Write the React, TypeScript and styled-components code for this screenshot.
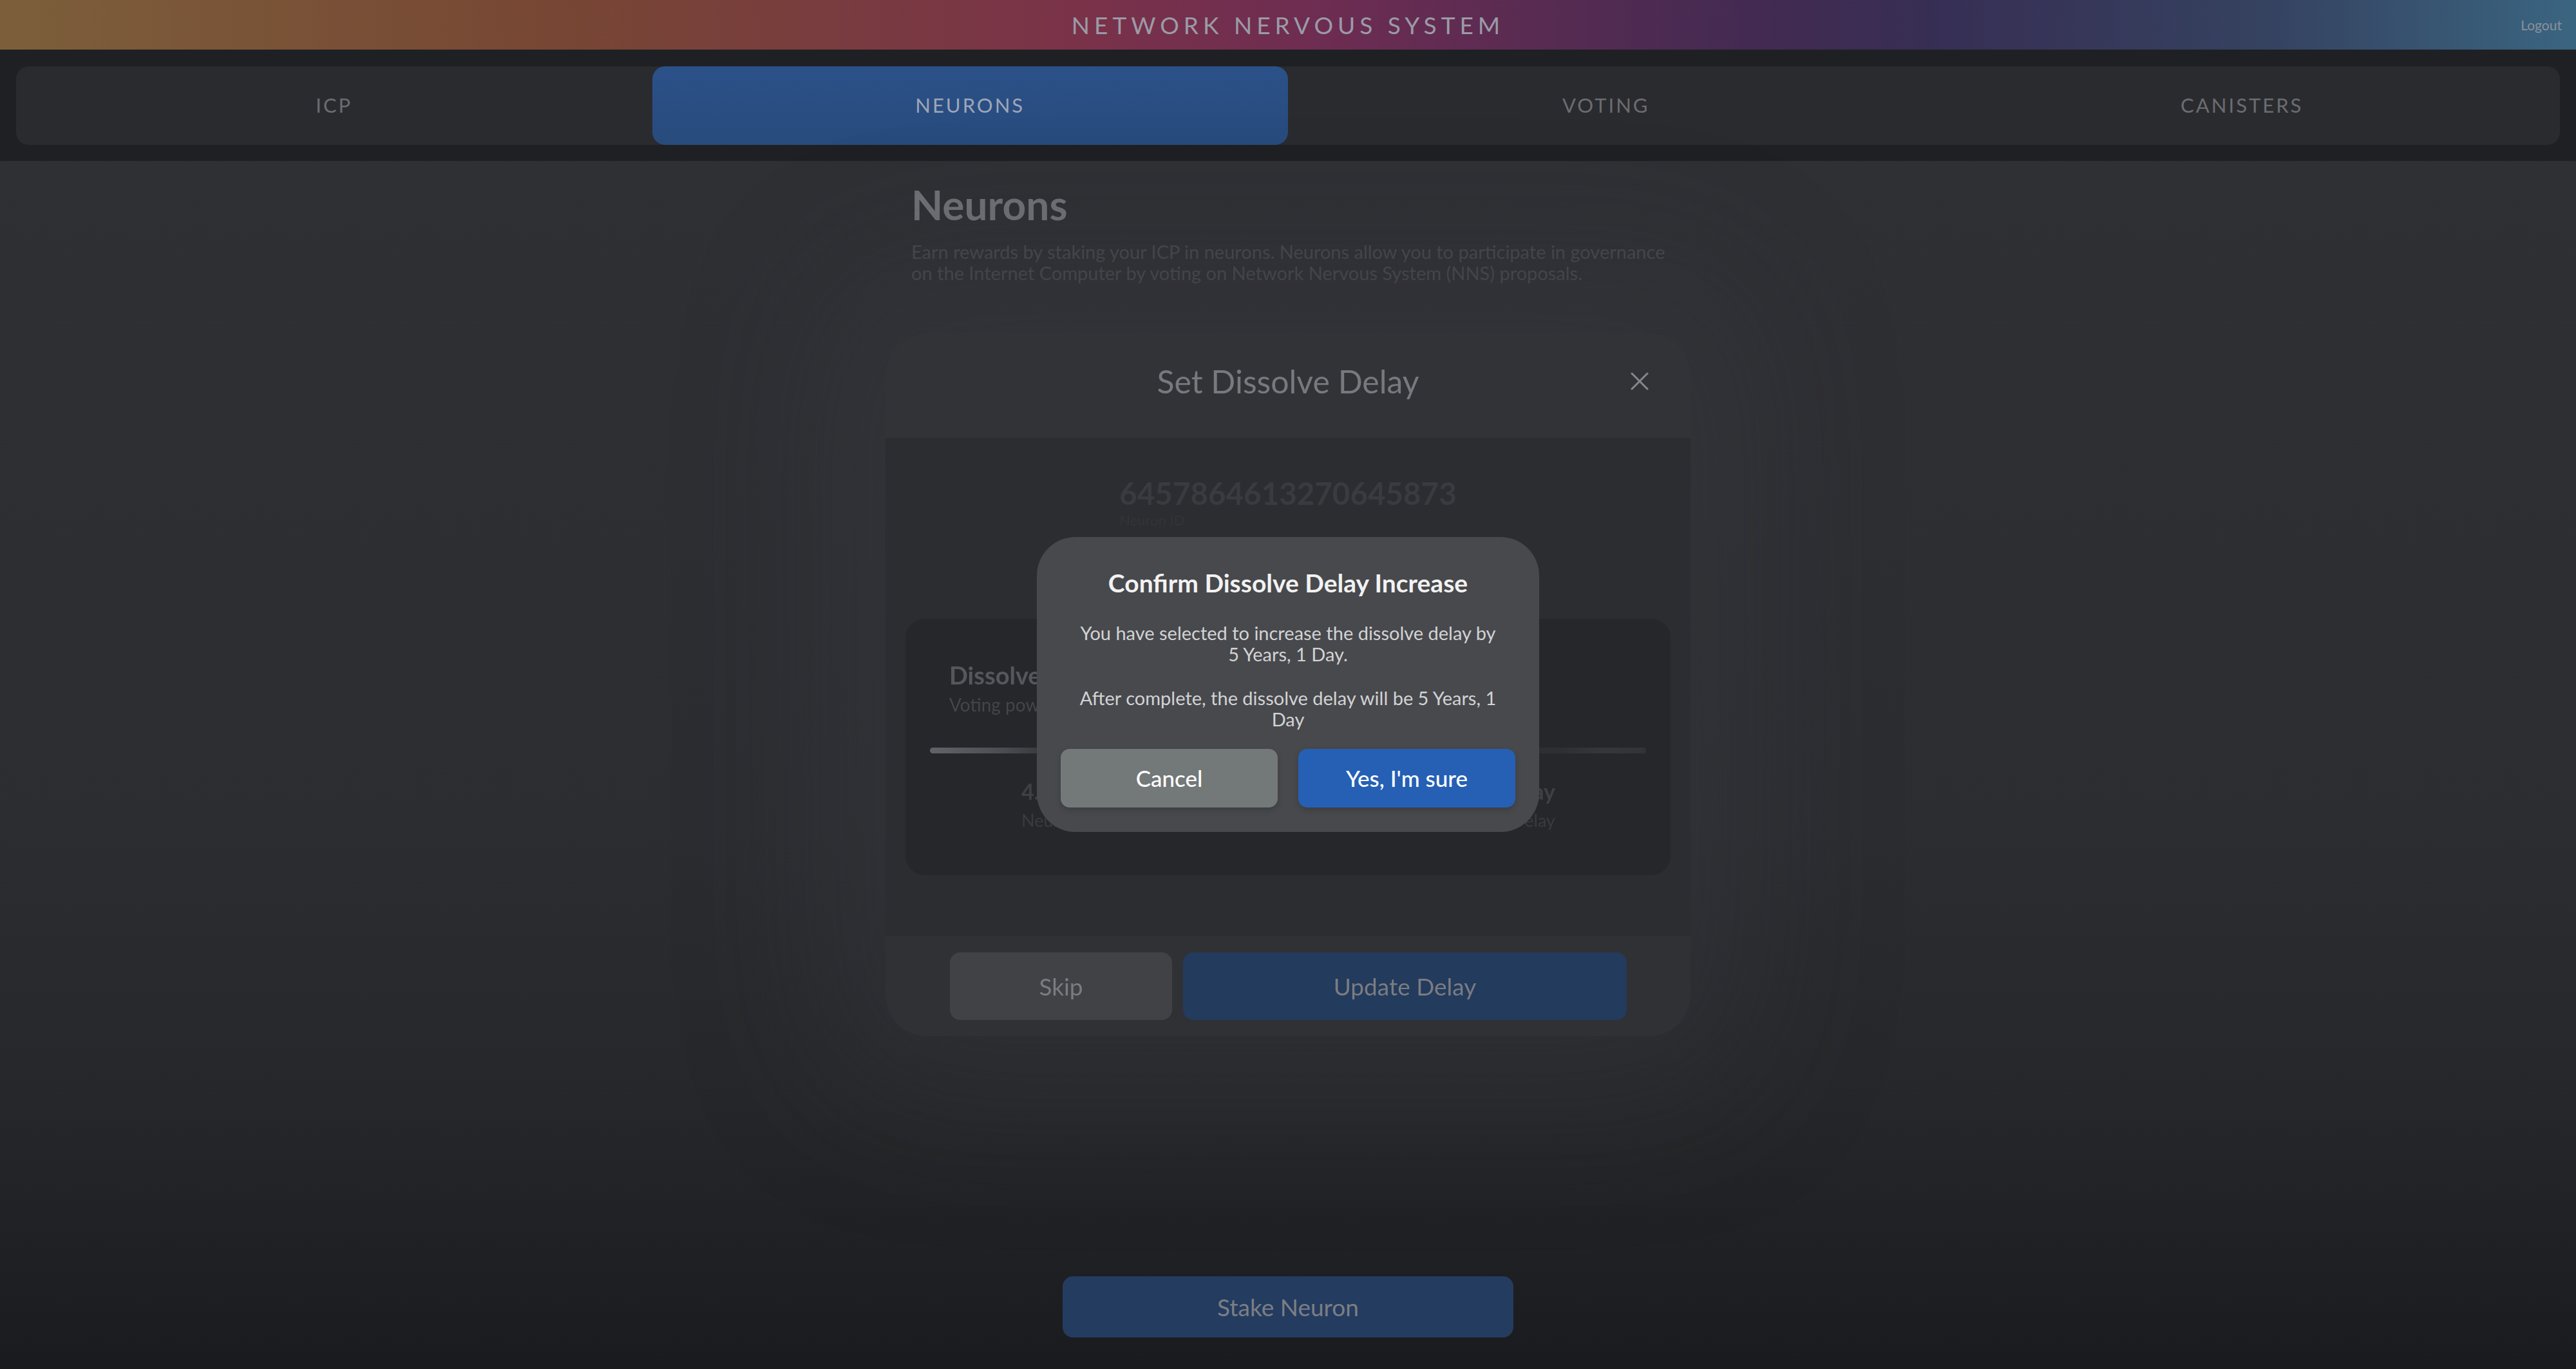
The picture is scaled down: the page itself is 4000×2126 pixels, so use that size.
import styled, { createGlobalStyle } from 'styled-components'

const GlobalStyle = createGlobalStyle`
  html, body {
    margin: 0;
    padding: 0;
  }
  body {
    background: #1b1c1f;
    font-family: Lato, "Noto Sans", sans-serif;
  }
  * {
    box-sizing: border-box;
  }
`

const TABS = ['ICP', 'NEURONS', 'VOTING', 'CANISTERS']

const App = () => {
    return (
        <>
            <GlobalStyle />
            <Page>
                <TopBar>
                    <span />
                    <Brand>Network Nervous System</Brand>
                    <Logout>Logout</Logout>
                </TopBar>
                <NavBar>
                    <Tabs>
                        {TABS.map(tab => (
                            <Tab key={tab} $active={tab === 'NEURONS'}>{tab}</Tab>
                        ))}
                    </Tabs>
                </NavBar>
                <Main>
                    <Intro>
                        <PageTitle>Neurons</PageTitle>
                        <Lead>
                            Earn rewards by staking your ICP in neurons. Neurons allow you to participate in governance
                            on the Internet Computer by voting on Network Nervous System (NNS) proposals.
                        </Lead>
                    </Intro>
                    <StakeButton>Stake Neuron</StakeButton>
                </Main>
            </Page>

            <Backdrop>
                <DelayModal>
                    <ModalHeader>
                        <span />
                        <ModalTitle>Set Dissolve Delay</ModalTitle>
                        <CloseButton aria-label="Close">
                            <svg width="28" height="28" viewBox="0 0 28 28">
                                <path d="M2 2 L26 26 M26 2 L2 26" stroke="currentColor" strokeWidth="3" strokeLinecap="round" />
                            </svg>
                        </CloseButton>
                    </ModalHeader>
                    <ModalBody>
                        <IdBlock>
                            <NeuronId>6457864613270645873</NeuronId>
                            <IdLabel>Neuron ID</IdLabel>
                        </IdBlock>
                        <DelayCard>
                            <CardHeading>
                                <CardTitle>Dissolve Delay</CardTitle>
                                <CardText>Voting power is given to neurons with a dissolve delay of at least 6 months</CardText>
                            </CardHeading>
                            <Track />
                            <Values>
                                <ValueColumn $align="left">
                                    <Value>4.00</Value>
                                    <ValueLabel>Neuron ICP</ValueLabel>
                                </ValueColumn>
                                <ValueColumn $align="right">
                                    <Value>5 Years, 1 Day</Value>
                                    <ValueLabel>Dissolve Delay</ValueLabel>
                                </ValueColumn>
                            </Values>
                        </DelayCard>
                    </ModalBody>
                    <ModalFooter>
                        <FooterButton $kind="secondary">Skip</FooterButton>
                        <FooterButton $kind="primary">Update Delay</FooterButton>
                    </ModalFooter>
                </DelayModal>
            </Backdrop>

            <Backdrop>
                <ConfirmDialog>
                    <ConfirmTitle>Confirm Dissolve Delay Increase</ConfirmTitle>
                    <ConfirmText>You have selected to increase the dissolve delay by 5 Years, 1 Day.</ConfirmText>
                    <ConfirmText>After complete, the dissolve delay will be 5 Years, 1 Day</ConfirmText>
                    <ConfirmActions>
                        <ConfirmButton $kind="cancel">Cancel</ConfirmButton>
                        <ConfirmButton $kind="confirm">Yes, I'm sure</ConfirmButton>
                    </ConfirmActions>
                </ConfirmDialog>
            </Backdrop>
        </>
    )
}

export default App


const Page = styled.div`
    min-height: 100vh;
    display: flex;
    flex-direction: column;
`;

const TopBar = styled.header`
    height: 77px;
    display: grid;
    grid-template-columns: 1fr auto 1fr;
    align-items: center;
    background: linear-gradient(90deg, #7c5f3a 0%, #774634 22%, #7a3249 42%, #6c2c52 52%, #432a52 68%, #372e54 75%, #354260 88%, #3a6581 100%);
`;

const Brand = styled.h1`
    margin: 0;
    font-size: 37px;
    font-weight: 400;
    letter-spacing: 7px;
    text-transform: uppercase;
    color: #9b9ba7;
`;

const Logout = styled.span`
    justify-self: end;
    padding-right: 22px;
    font-size: 21px;
    color: #8c909c;
`;

const NavBar = styled.nav`
    background: #1f2023;
    padding: 26px 25px 25px;
`;

const Tabs = styled.div`
    display: grid;
    grid-template-columns: repeat(4, 1fr);
    height: 122px;
    background: #2a2b2f;
    border-radius: 20px;
`;

const Tab = styled.div<{ $active?: boolean }>`
    display: flex;
    align-items: center;
    justify-content: center;
    padding-bottom: 3px;
    border-radius: 20px;
    font-size: 31px;
    letter-spacing: 3px;
    color: ${p => p.$active ? '#9ea6b8' : '#6b6c71'};
    background: ${p => p.$active ? 'linear-gradient(180deg, #2b5189 0%, #284b7c 100%)' : 'transparent'};
`;

const Main = styled.main`
    flex: 1;
    display: flex;
    flex-direction: column;
    align-items: center;
    padding: 30px 0 49px;
    background: linear-gradient(180deg, #2f3034 0%, #2c2d31 55%, #26272a 78%, #1a1b1e 100%);
`;

const Intro = styled.section`
    width: 1200px;
    padding: 0 5px 0 15px;
`;

const PageTitle = styled.h2`
    margin: 0;
    font-size: 64px;
    font-weight: 700;
    line-height: 1.2;
    color: #6f7075;
`;

const Lead = styled.p`
    margin: 17px 0 0;
    font-size: 29px;
    line-height: 33px;
    color: #46474c;
`;

const StakeButton = styled.button`
    margin-top: auto;
    width: 700px;
    height: 95px;
    border: 0;
    border-radius: 16px;
    background: #243c60;
    color: #7c7e84;
    font-family: inherit;
    font-size: 37px;
`;

const Backdrop = styled.div`
    position: fixed;
    inset: 0;
    display: flex;
    align-items: center;
    justify-content: center;
`;

const DelayModal = styled.div`
    width: 1250px;
    height: 1092px;
    display: flex;
    flex-direction: column;
    border-radius: 64px;
    overflow: hidden;
    background: #2c2d31;
    box-shadow: 0 0 220px 90px rgba(58, 60, 66, 0.35);
`;

const ModalHeader = styled.div`
    height: 163px;
    display: grid;
    grid-template-columns: 1fr auto 1fr;
    align-items: center;
    padding: 0 65px 14px;
    background: #323337;
`;

const ModalTitle = styled.h3`
    margin: 0;
    font-size: 50px;
    font-weight: 400;
    color: #78797e;
`;

const CloseButton = styled.button`
    justify-self: end;
    display: flex;
    padding: 0;
    border: 0;
    background: none;
    color: #86878c;
`;

const ModalBody = styled.div`
    flex: 1;
    display: flex;
    flex-direction: column;
    padding: 57px 31px 94px;
`;

const IdBlock = styled.div`
    align-self: center;
    display: flex;
    flex-direction: column;
`;

const NeuronId = styled.div`
    font-size: 47.5px;
    font-weight: 700;
    line-height: 1.2;
    color: #3a3b40;
`;

const IdLabel = styled.div`
    font-size: 22px;
    color: #333438;
`;

const DelayCard = styled.div`
    margin-top: auto;
    height: 398px;
    padding: 65px 38px 0;
    border-radius: 30px;
    background: #26272b;
`;

const CardHeading = styled.div`
    padding: 0 30px;
`;

const CardTitle = styled.div`
    font-size: 38px;
    font-weight: 700;
    line-height: 1.2;
    color: #56575c;
`;

const CardText = styled.div`
    margin-top: 6px;
    font-size: 28px;
    line-height: 1.2;
    color: #444549;
`;

const Track = styled.div`
    margin-top: 50px;
    height: 9px;
    border-radius: 5px;
    background: linear-gradient(90deg, #626368 0%, #4c4d52 10%, #37383c 16%, #2e2f33 60%, #2e2f33 88%, #36373b 94%, #323337 100%);
`;

const Values = styled.div`
    display: flex;
    justify-content: space-between;
    margin-top: 38px;
    padding: 0 141px 0 142px;
`;

const ValueColumn = styled.div<{ $align: 'left' | 'right' }>`
    display: flex;
    flex-direction: column;
    gap: 8px;
    text-align: ${p => p.$align};
`;

const Value = styled.div`
    font-size: 34px;
    font-weight: 700;
    color: #3f4044;
`;

const ValueLabel = styled.div`
    font-size: 27px;
    color: #3a3b3f;
`;

const ModalFooter = styled.div`
    height: 156px;
    display: flex;
    gap: 17px;
    padding: 26px 99px 25px 100px;
    background: #303135;
`;

const FooterButton = styled.button<{ $kind: 'primary' | 'secondary' }>`
    flex: ${p => p.$kind === 'primary' ? 1 : '0 0 345px'};
    border: 0;
    border-radius: 16px;
    background: ${p => p.$kind === 'primary' ? '#233b5d' : '#414246'};
    color: #7b7c81;
    font-family: inherit;
    font-size: 37px;
`;

const ConfirmDialog = styled.div`
    width: 780px;
    display: flex;
    flex-direction: column;
    align-items: center;
    padding: 48px 37px 38px;
    border-radius: 60px;
    background: #48494d;
`;

const ConfirmTitle = styled.h4`
    margin: 0 0 37px;
    font-size: 39px;
    font-weight: 700;
    line-height: 1.2;
    color: #f2f2f2;
`;

const ConfirmText = styled.p`
    margin: 0 0 35px;
    padding: 0 24px;
    font-size: 29px;
    line-height: 33px;
    text-align: center;
    color: #d2d3d5;

    &:last-of-type {
        margin-bottom: 30px;
    }
`;

const ConfirmActions = styled.div`
    display: flex;
    gap: 32px;
`;

const ConfirmButton = styled.button<{ $kind: 'cancel' | 'confirm' }>`
    width: 337px;
    height: 91px;
    border: 0;
    border-radius: 14px;
    background: ${p => p.$kind === 'confirm' ? '#2560b5' : '#737879'};
    color: #ffffff;
    font-family: inherit;
    font-size: 35px;
    font-weight: 500;
    box-shadow: 0 4px 10px rgba(0, 0, 0, 0.18);
`;
